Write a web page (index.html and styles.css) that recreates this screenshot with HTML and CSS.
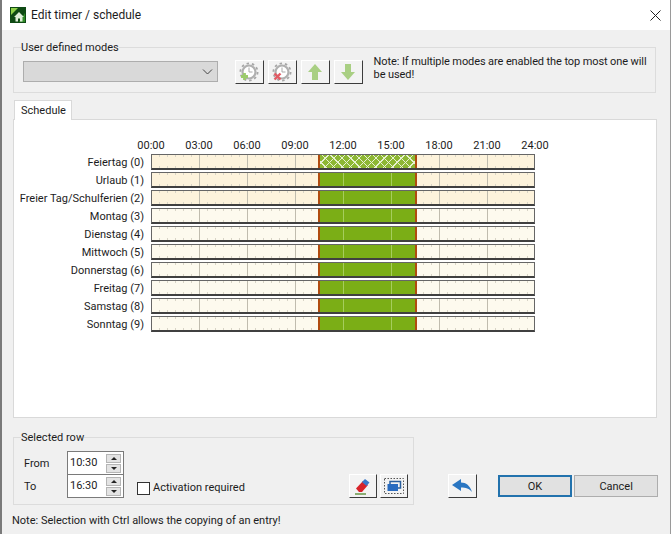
FILE: index.html
```html
<!DOCTYPE html>
<html lang="en">
<head>
<meta charset="utf-8">
<title>Edit timer / schedule</title>
<link rel="stylesheet" href="styles.css">
</head>
<body>
<div class="window">
  <header class="titlebar">
    <svg class="app-icon" width="16" height="16" viewBox="0 0 16 16"><rect width="16" height="16" fill="#0f4a14"/><path d="M1 1H8L1 8Z" fill="#8fd04a"/><path d="M15 6V15H9Z" fill="#2f8a26"/><path d="M9 5L14 10H12.500V14.500H10V11.500H8V14.500H5.500V10H4Z" fill="#dfeeda"/></svg>
    <span class="title">Edit timer / schedule</span>
    <svg class="close" width="11" height="11" viewBox="0 0 11 11"><path d="M.5.5L10.500 10.500M10.500.5L.5 10.500" stroke="#222" stroke-width="1" fill="none"/></svg>
  </header>
  <main class="content">
    <fieldset class="group modes">
      <legend>User defined modes</legend>
      <div class="modes-row">
        <div class="combo">
          <svg width="11" height="6" viewBox="0 0 11 6"><path d="M1 .5L5.500 5L10 .5" stroke="#444" fill="none"/></svg>
        </div>
        <div class="tools">
          <button class="tool" type="button"><svg width="20" height="20" viewBox="0 0 20 20"><circle cx="10" cy="10" r="6.500" fill="#fff" stroke="#b0b0b0" stroke-width="2.200"/><circle cx="10" cy="10" r="8.600" fill="none" stroke="#a6a6a6" stroke-width="1.800" stroke-dasharray="2.500 2.900"/><path d="M10 5.500V10H13.500" stroke="#aaa" fill="none"/><path d="M2 14.500H9M5.500 11V18" stroke="#9ccb6c" stroke-width="2.800"/></svg></button>
          <button class="tool" type="button"><svg width="20" height="20" viewBox="0 0 20 20"><circle cx="10" cy="10" r="6.500" fill="#fff" stroke="#b0b0b0" stroke-width="2.200"/><circle cx="10" cy="10" r="8.600" fill="none" stroke="#a6a6a6" stroke-width="1.800" stroke-dasharray="2.500 2.900"/><path d="M10 5.500V10H13.500" stroke="#aaa" fill="none"/><path d="M2.500 11.500L8.500 17.500M8.500 11.500L2.500 17.500" stroke="#e25a64" stroke-width="2.400"/></svg></button>
          <button class="tool" type="button"><svg width="16" height="18" viewBox="0 0 16 18"><path d="M8 1L15 9H11V17H5V9H1Z" fill="#a9cf83"/></svg></button>
          <button class="tool" type="button"><svg width="16" height="18" viewBox="0 0 16 18"><path d="M8 17L15 9H11V1H5V9H1Z" fill="#a9cf83"/></svg></button>
        </div>
        <p class="note">Note: If multiple modes are enabled the top most one will be used!</p>
      </div>
    </fieldset>

    <div class="tab">Schedule</div>
    <section class="panel">
      <div class="hours">
        <span>00:00</span><span>03:00</span><span>06:00</span><span>09:00</span><span>12:00</span><span>15:00</span><span>18:00</span><span>21:00</span><span>24:00</span>
      </div>
      <div class="chart">
        <div class="label">Feiertag (0)</div>
        <div class="track holiday"><div class="slot hatched"></div></div>
        <div class="label">Urlaub (1)</div>
        <div class="track holiday"><div class="slot"></div></div>
        <div class="label">Freier Tag/Schulferien (2)</div>
        <div class="track holiday"><div class="slot"></div></div>
        <div class="label">Montag (3)</div>
        <div class="track"><div class="slot"></div></div>
        <div class="label">Dienstag (4)</div>
        <div class="track"><div class="slot"></div></div>
        <div class="label">Mittwoch (5)</div>
        <div class="track"><div class="slot"></div></div>
        <div class="label">Donnerstag (6)</div>
        <div class="track"><div class="slot"></div></div>
        <div class="label">Freitag (7)</div>
        <div class="track"><div class="slot"></div></div>
        <div class="label">Samstag (8)</div>
        <div class="track"><div class="slot"></div></div>
        <div class="label">Sonntag (9)</div>
        <div class="track"><div class="slot"></div></div>
      </div>
    </section>

    <div class="bottom">
      <fieldset class="group selected">
        <legend>Selected row</legend>
        <div class="selected-row">
          <div class="times">
            <span class="time-label">From</span>
            <div class="spin"><span>10:30</span><div class="arrows"><i class="up"></i><i class="down"></i></div></div>
            <span class="time-label">To</span>
            <div class="spin"><span>16:30</span><div class="arrows"><i class="up"></i><i class="down"></i></div></div>
          </div>
          <label class="check"><span class="box"></span>Activation required</label>
          <div class="tools small">
            <button class="tool" type="button"><svg width="20" height="20" viewBox="0 0 20 20"><path d="M3 12.500L10 5L15 9L9 16H6Z" fill="#d8232a"/><path d="M9 6L12 3L16.500 6.500L13.500 10Z" fill="#3a78c9"/><path d="M2 18H13" stroke="#5b8f3a" stroke-width="1.400"/></svg></button>
            <button class="tool" type="button"><svg width="20" height="20" viewBox="0 0 20 20"><rect x=".5" y="2.500" width="19" height="15" fill="none" stroke="#555" stroke-dasharray="1.500 1.500"/><path d="M6 8V5.500H16.500V12H14" fill="none" stroke="#2a5f9e" stroke-width="1.500"/><rect x="3.500" y="8" width="10.500" height="7" fill="#2a6cc0"/></svg></button>
          </div>
        </div>
      </fieldset>
      <button class="tool back" type="button"><svg width="22" height="16" viewBox="0 0 22 16"><path d="M1 7L10 1V4.500C15 4.500 19 7.500 21 14C18 10.500 15 9.500 10 9.500V13Z" fill="#2a76c2"/></svg></button>
      <button class="cmd default" type="button">OK</button>
      <button class="cmd" type="button">Cancel</button>
    </div>
    <p class="hint">Note: Selection with Ctrl allows the copying of an entry!</p>
  </main>
</div>
</body>
</html>
```
FILE: styles.css
```css
* { box-sizing: border-box; }
html, body { margin: 0; height: 100%; }
body {
  font: 11px/14px Roboto, sans-serif;
  color: #1c1c1c;
  overflow: hidden;
}
.window {
  width: 671px;
  height: 534px;
  background: #f0f0f0;
  border-left: 2px solid #7a7a7a;
  border-right: 1px solid #9a9a9a;
  display: flex;
  flex-direction: column;
}
.titlebar {
  height: 30px;
  flex: none;
  background: #fff;
  display: flex;
  align-items: center;
  padding: 0 9px 0 8px;
  gap: 5px;
}
.title { flex: 1; font-size: 12px; }
.content {
  flex: 1;
  display: flex;
  flex-direction: column;
  padding: 9px 12px 0 11px;
}
.group {
  margin: 0;
  padding: 0;
  border: 1px solid #dcdcdc;
  min-width: 0;
}
.group legend {
  margin: 0 0 -2px 7px;
  padding: 2px 0 0;
  line-height: 14px;
}
.modes { width: 643px; height: 54px; }
.modes-row {
  display: flex;
  align-items: flex-start;
  padding: 7px 0 0 9px;
}
.combo {
  width: 195px;
  height: 21px;
  margin-top: 1px;
  background: #d9d9d9;
  border: 1px solid #adadad;
  display: flex;
  align-items: center;
  justify-content: flex-end;
  padding-right: 4px;
}
.tools { display: flex; gap: 4px; margin-left: 17px; }
.tool {
  width: 29px;
  height: 24px;
  padding: 0;
  background: #f3f3f3;
  border: 1px solid;
  border-color: #fff #3c3c3c #3c3c3c #fff;
  display: flex;
  align-items: center;
  justify-content: center;
}
.note {
  margin: -5px 0 0 11px;
  width: 282px;
  line-height: 13px;
  letter-spacing: -.1px;
}
.tab {
  width: 58px;
  height: 20px;
  margin: 7px 0 0 1px;
  padding-left: 6px;
  line-height: 20px;
  background: #fff;
  border: 1px solid #d9d9d9;
  border-bottom: 0;
  position: relative;
  z-index: 1;
}
.panel {
  width: 644px;
  height: 299px;
  margin-top: -1px;
  background: #fff;
  border: 1px solid #d9d9d9;
}
.hours {
  display: flex;
  margin: 19px 0 0 113px;
  height: 15px;
}
.hours span { width: 48px; text-align: center; }
.chart {
  display: grid;
  grid-template-columns: 130px 384px;
  column-gap: 7px;
  row-gap: 2px;
}
.label { text-align: right; height: 16px; line-height: 18px; white-space: nowrap; }
.track {
  height: 16px;
  position: relative;
  border: 1px solid #666;
  border-bottom: 2px solid #404040;
  background-color: #fdfaee;
  background-image:
    repeating-linear-gradient(to right, #c0bcae 0 1px, transparent 1px 48px),
    repeating-linear-gradient(to right, #d8d4c6 0 1px, transparent 1px 8px),
    repeating-linear-gradient(to right, #d8d4c6 0 1px, transparent 1px 8px);
  background-size: 100% 100%, 100% 2px, 100% 2px;
  background-position: 47px 0, 7px 0, 7px 100%;
  background-repeat: no-repeat;
}
.holiday { background-color: #fdf3dc; }
.slot {
  position: absolute;
  top: 0;
  bottom: 0;
  left: 166px;
  width: 99px;
  border-left: 2px solid #b04c10;
  border-right: 2px solid #b04c10;
  background-color: #7bae16;
  background-image: repeating-linear-gradient(to right, transparent 0 23px, #a6cd5c 23px 24px, transparent 24px 48px);
  background-origin: padding-box;
}
.hatched {
  background-color: #8db733;
  background-image:
    repeating-linear-gradient(45deg, transparent 0 4px, #e8f1d2 4px 5px, transparent 5px 6px),
    repeating-linear-gradient(-45deg, transparent 0 4px, #e8f1d2 4px 5px, transparent 5px 6px);
}
.bottom {
  display: flex;
  align-items: flex-end;
  margin-top: 11px;
}
.selected { width: 402px; height: 76px; }
.selected-row {
  display: flex;
  align-items: flex-end;
  padding: 0 0 6px 10px;
  height: 61px;
}
.times {
  display: grid;
  grid-template-columns: 43px 57px;
  align-items: center;
  width: 100px;
}
.spin {
  height: 24px;
  margin-top: -1px;
  background: #fff;
  border: 1px solid #7a7a7a;
  display: flex;
  align-items: center;
  justify-content: space-between;
  padding: 0 2px 0 2px;
}
.arrows { display: flex; flex-direction: column; gap: 1px; }
.arrows i {
  display: flex;
  width: 15px;
  height: 9px;
  background: #e3e3e3;
  border: 1px solid #b5b5b5;
  align-items: center;
  justify-content: center;
}
.arrows i::before {
  content: "";
  border-left: 3px solid transparent;
  border-right: 3px solid transparent;
}
.up::before { border-bottom: 3px solid #222; }
.down::before { border-top: 3px solid #222; }
.check {
  display: flex;
  align-items: center;
  gap: 3px;
  margin: 0 0 3px 13px;
  width: 212px;
}
.box {
  width: 13px;
  height: 13px;
  background: #fff;
  border: 1px solid #333;
}
.tools.small { gap: 3px; margin: 0; }
.tools.small .tool { width: 28px; }
.back { margin: 0 21px 7px 34px; }
.cmd {
  height: 22px;
  width: 84px;
  margin: 0 0 8px 2px;
  padding: 2px 0 0;
  background: #e1e1e1;
  border: 1px solid #adadad;
  font: inherit;
  color: inherit;
}
.default { width: 75px; margin-left: 0; border: 2px solid #2272ad; }
.hint { margin: 9px 0 0 -1px; }
```
